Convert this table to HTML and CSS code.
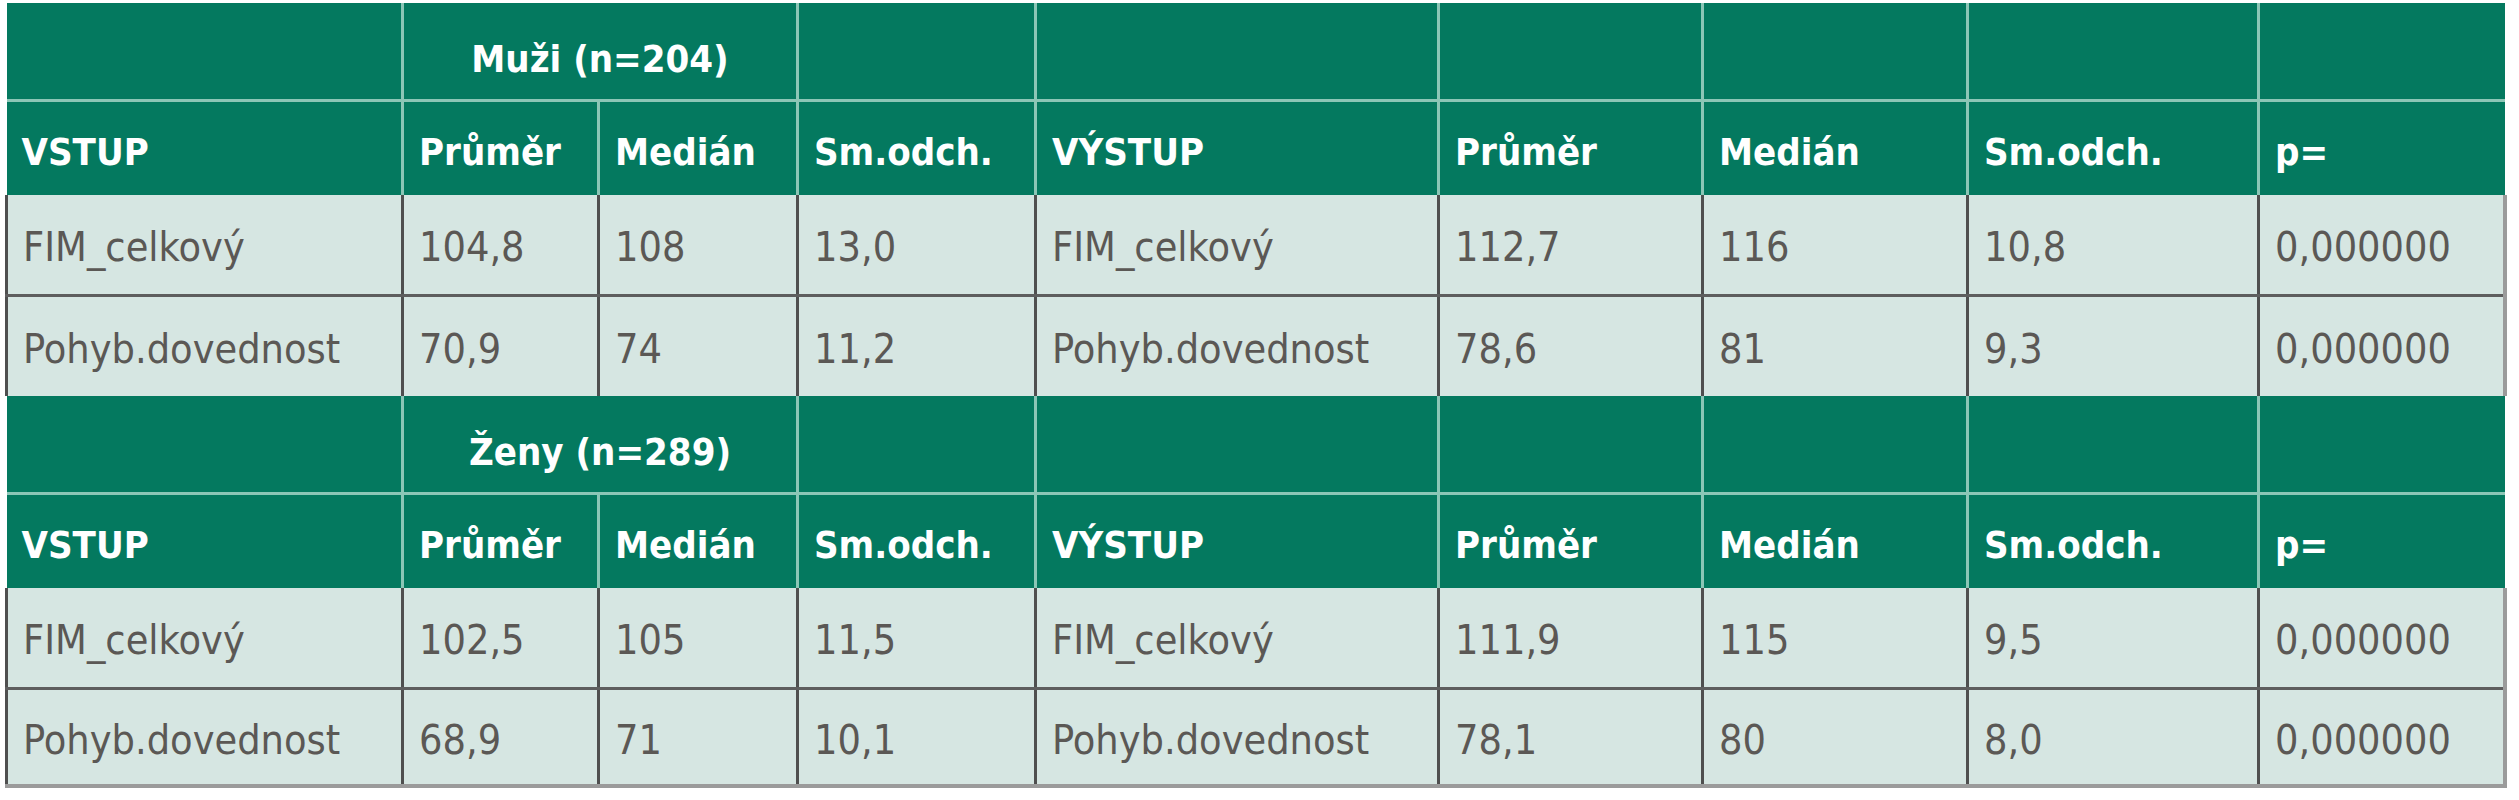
FILE: index.html
```html
<!DOCTYPE html>
<html lang="cs">
<head>
<meta charset="utf-8">
<title>FIM – vstup a výstup</title>
<link rel="stylesheet" href="styles.css">
</head>
<body>
<table class="stats">
  <colgroup>
    <col class="c-label"><col class="c-n1"><col class="c-n2"><col class="c-n3">
    <col class="c-label2"><col class="c-n4"><col class="c-n5"><col class="c-n6"><col class="c-p">
  </colgroup>
  <tbody>
    <tr class="group">
      <th></th><th colspan="2" class="group-title">Muži (n=204)</th><th></th><th></th><th></th><th></th><th></th><th class="last"></th>
    </tr>
    <tr class="head">
      <th>VSTUP</th><th>Průměr</th><th>Medián</th><th>Sm.odch.</th><th>VÝSTUP</th><th>Průměr</th><th>Medián</th><th>Sm.odch.</th><th class="last">p=</th>
    </tr>
    <tr class="data first">
      <td>FIM_celkový</td><td>104,8</td><td>108</td><td>13,0</td><td>FIM_celkový</td><td>112,7</td><td>116</td><td>10,8</td><td class="last">0,000000</td>
    </tr>
    <tr class="data second">
      <td>Pohyb.dovednost</td><td>70,9</td><td>74</td><td>11,2</td><td>Pohyb.dovednost</td><td>78,6</td><td>81</td><td>9,3</td><td class="last">0,000000</td>
    </tr>
    <tr class="group">
      <th></th><th colspan="2" class="group-title">Ženy (n=289)</th><th></th><th></th><th></th><th></th><th></th><th class="last"></th>
    </tr>
    <tr class="head">
      <th>VSTUP</th><th>Průměr</th><th>Medián</th><th>Sm.odch.</th><th>VÝSTUP</th><th>Průměr</th><th>Medián</th><th>Sm.odch.</th><th class="last">p=</th>
    </tr>
    <tr class="data first">
      <td>FIM_celkový</td><td>102,5</td><td>105</td><td>11,5</td><td>FIM_celkový</td><td>111,9</td><td>115</td><td>9,5</td><td class="last">0,000000</td>
    </tr>
    <tr class="data second end">
      <td>Pohyb.dovednost</td><td>68,9</td><td>71</td><td>10,1</td><td>Pohyb.dovednost</td><td>78,1</td><td>80</td><td>8,0</td><td class="last">0,000000</td>
    </tr>
  </tbody>
</table>
</body>
</html>
```

FILE: styles.css
```css
html, body {
  margin: 0;
  padding: 0;
  background: #ffffff;
}

body {
  padding: 3px 0 0 5px;
}

.stats {
  border-collapse: collapse;
  table-layout: fixed;
  width: 2498px;
  font-family: "DejaVu Sans Condensed", "DejaVu Sans", sans-serif;
  font-stretch: condensed;
}

.c-label { width: 396px; }
.c-n1 { width: 196px; }
.c-n2 { width: 199px; }
.c-n3 { width: 238px; }
.c-label2 { width: 403px; }
.c-n4 { width: 264px; }
.c-n5 { width: 265px; }
.c-n6 { width: 291px; }
.c-p { width: 246px; }

.stats th,
.stats td {
  box-sizing: border-box;
  padding: 0 0 0 15px;
  vertical-align: middle;
  text-align: left;
  white-space: nowrap;
}

.stats th {
  background: #04795f;
  color: #ffffff;
  font-weight: bold;
  font-size: 38px;
  border-right: 3px solid #8cc6b6;
}

.stats th.last {
  border-right: none;
}

.group th {
  height: 97px;
  border-bottom: 3px solid #8cc6b6;
  padding-top: 16px;
}

.group th.group-title {
  text-align: center;
  padding-left: 0;
}

.head th {
  height: 95px;
  padding-top: 8px;
}

.stats td {
  background: #d6e6e2;
  color: #5b5855;
  font-size: 41px;
  padding-top: 6px;
  border-left: 3px solid #4f4f4f;
}

.stats td.last {
  border-right: 4px solid #9b9b9b;
}

.data.first td {
  height: 100px;
  border-bottom: 3px solid #5e5e5e;
}

.data.second td {
  height: 101px;
}

.data.end td {
  height: 98px;
  border-bottom: 4px solid #9b9b9b;
}
```
